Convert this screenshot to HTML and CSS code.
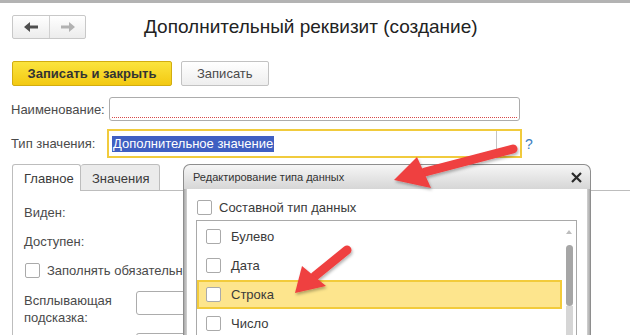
FILE: index.html
```html
<!DOCTYPE html>
<html lang="ru">
<head>
    <meta charset="UTF-8">
    <title>Дополнительный реквизит (создание)</title>
    <link rel="stylesheet" href="styles.css">
</head>
<body>
    <div class="topbar"></div>
    <header class="header">
        <div class="nav">
            <button class="nav-btn">
                <svg width="14" height="10" viewBox="0 0 14 10"><path d="M0 5 L6 0 L6 3.5 L14 3.5 L14 6.5 L6 6.5 L6 10 Z" fill="#4f4f4f"/></svg>
            </button>
            <button class="nav-btn">
                <svg width="14" height="10" viewBox="0 0 14 10"><path d="M14 5 L8 0 L8 3.5 L0 3.5 L0 6.5 L8 6.5 L8 10 Z" fill="#b2b2b2"/></svg>
            </button>
        </div>
        <h1>Дополнительный реквизит (создание)</h1>
    </header>

    <div class="toolbar">
        <button class="btn btn-main">Записать и закрыть</button>
        <button class="btn">Записать</button>
    </div>

    <div class="row row-name">
        <label>Наименование:</label>
        <div class="field field-name"></div>
    </div>
    <div class="row row-type">
        <label>Тип значения:</label>
        <div class="field field-type">
            <span class="sel">Дополнительное значение</span>
            <span class="choose"></span>
        </div>
        <span class="help">?</span>
    </div>

    <div class="tabs">
        <div class="tab active">Главное</div>
        <div class="tab">Значения</div>
        <div class="tab-rest"></div>
    </div>
    <div class="panel">
        <div class="prow">Виден:</div>
        <div class="prow">Доступен:</div>
        <div class="prow"><span class="cb"></span>Заполнять обязательно</div>
        <div class="prow hint">
            <span>Всплывающая<br>подсказка:</span>
            <div class="field small"></div>
        </div>
        <div class="prow last">
            <span></span>
            <div class="field small cut"></div>
        </div>
    </div>

    <div class="dialog">
        <div class="dlg-title">
            <span>Редактирование типа данных</span>
            <svg class="close" width="11" height="11" viewBox="0 0 11 11"><path d="M1 1 L10 10 M10 1 L1 10" stroke="#2a2a2a" stroke-width="2.2"/></svg>
        </div>
        <div class="dlg-body">
            <div class="compound"><span class="cb"></span>Составной тип данных</div>
            <div class="listbox">
                <ul class="types">
                    <li><span class="cb"></span>Булево</li>
                    <li><span class="cb"></span>Дата</li>
                    <li class="current"><span class="cb"></span>Строка</li>
                    <li><span class="cb"></span>Число</li>
                </ul>
                <div class="scroll">
                    <span class="up"></span>
                    <span class="thumb"></span>
                    <span class="track"></span>
                </div>
            </div>
        </div>
    </div>

    <svg class="arrows" width="630" height="335" viewBox="0 0 630 335">
        <defs>
            <filter id="sh" x="-20%" y="-20%" width="140%" height="140%">
                <feDropShadow dx="1" dy="2" stdDeviation="1.5" flood-color="#000" flood-opacity="0.3"/>
            </filter>
        </defs>
        <g filter="url(#sh)" fill="#ef3f3f">
            <line x1="513" y1="149" x2="425" y2="172" stroke="#ef3f3f" stroke-width="9" stroke-linecap="round"/>
            <polygon points="394,180 417,157 431,188"/>
            <line x1="347" y1="250" x2="315" y2="276" stroke="#ef3f3f" stroke-width="9" stroke-linecap="round"/>
            <polygon points="295,293 302,266 326,286"/>
        </g>
    </svg>
</body>
</html>
```

FILE: styles.css
```css
body {
    margin: 0;
    width: 630px;
    height: 335px;
    overflow: hidden;
    position: relative;
    background: #fff;
    font-family: "Liberation Sans", Arial, sans-serif;
    font-size: 13px;
    color: #4a4a4a;
}

.topbar {
    height: 3px;
    background: #b3b3b3;
}

.header {
    display: flex;
    align-items: center;
    margin: 12px 0 0 12px;
}

.nav {
    display: flex;
    height: 24px;
    border: 1px solid #c8c8c8;
    border-radius: 2px;
    box-sizing: border-box;
    background: linear-gradient(#ffffff, #ececec);
}

.nav-btn {
    width: 36px;
    border: none;
    background: none;
    padding: 0;
    display: flex;
    align-items: center;
    justify-content: center;
}

.nav-btn + .nav-btn {
    border-left: 1px solid #d0d0d0;
}

h1 {
    margin: 0 0 0 58px;
    font-size: 19px;
    font-weight: normal;
    color: #222;
}

.toolbar {
    display: flex;
    gap: 9px;
    margin: 22px 0 0 12px;
}

.btn {
    height: 25px;
    padding: 0 15px;
    border: 1px solid #c2c2c2;
    border-radius: 2px;
    background: linear-gradient(#ffffff, #eeeeee);
    font-family: inherit;
    font-size: 13px;
    color: #4a4a4a;
    white-space: nowrap;
}

.btn-main {
    width: 160px;
    padding: 0;
    border-color: #d2ad10;
    background: linear-gradient(#fbe43e, #f3c912);
    font-weight: bold;
    color: #333;
}

.row {
    display: flex;
    align-items: center;
    padding-left: 11px;
}

.row label {
    width: 98px;
    color: #4a4a4a;
}

.row-name {
    margin-top: 11px;
}

.row-type {
    margin-top: 8px;
}

.row-type label {
    width: 96px;
}

.field {
    border: 1px solid #acacac;
    border-radius: 3px;
    box-sizing: border-box;
}

.field-name {
    width: 411px;
    height: 24px;
    background: repeating-linear-gradient(90deg, #d84a4a 0 1px, transparent 1px 2px) left 2px bottom 2px / calc(100% - 4px) 1px no-repeat;
}

.field-type {
    width: 415px;
    height: 29px;
    border: 2px solid #f1cb3d;
    border-radius: 0;
    display: flex;
    align-items: center;
    padding-left: 3px;
}

.sel {
    background: #3f5fc2;
    color: #fff;
    line-height: 16px;
    padding: 0 1px;
}

.choose {
    margin-left: auto;
    margin-right: 23px;
    align-self: stretch;
    border-left: 1px solid #c4c4c4;
}

.help {
    margin-left: 3px;
    color: #3b7dc0;
    font-size: 14px;
}

.tabs {
    display: flex;
    margin: 6px 0 0 12px;
    height: 27px;
}

.tab {
    box-sizing: border-box;
    padding: 6px 10px 0 11px;
    border: 1px solid #bdbdbd;
    border-bottom: none;
    border-radius: 3px 3px 0 0;
    color: #3a3a3a;
}

.tab.active {
    width: 69px;
    background: #fff;
}

.tab + .tab {
    width: 79px;
    border-left: none;
    background: #ebebeb;
    border-bottom: 1px solid #bdbdbd;
}

.tab-rest {
    flex: 1;
    border-bottom: 1px solid #bdbdbd;
}

.panel {
    margin-left: 12px;
    border-left: 1px solid #bdbdbd;
    padding: 7px 0 0 11px;
}

.prow {
    height: 29px;
    display: flex;
    align-items: center;
    white-space: nowrap;
}

.cb {
    display: inline-block;
    width: 13px;
    height: 13px;
    border: 1px solid #aaa;
    border-radius: 2px;
    margin-right: 7px;
    background: #fff;
}

.prow .cb {
    margin-left: 1px;
}

.hint {
    height: auto;
    margin-top: 7px;
    align-items: flex-start;
    line-height: 17px;
}

.hint span,
.last span {
    width: 112px;
    flex: none;
}

.field.small {
    width: 70px;
    height: 24px;
    margin-top: -1px;
}

.last {
    height: 9px;
    margin-top: 8px;
    align-items: flex-start;
}

.field.cut {
    height: 3px;
    border-bottom: none;
    border-radius: 3px 3px 0 0;
}

.dialog {
    position: absolute;
    left: 183px;
    top: 164px;
    width: 408px;
    height: 171px;
    box-sizing: border-box;
    border: 1px solid #8e8e8e;
    border-bottom: none;
    border-radius: 7px 7px 0 0;
    background: linear-gradient(90deg, #a9a9a9, #d2d2d2 3px, #d2d2d2 calc(100% - 3px), #a9a9a9);
    padding: 0 3px;
    overflow: hidden;
}

.dlg-title {
    height: 24px;
    margin: 0 -3px;
    padding: 0 8px 0 9px;
    border-radius: 6px 6px 0 0;
    background: linear-gradient(#f6f6f6, #d6d6d6);
    display: flex;
    align-items: center;
    font-size: 11px;
    color: #333;
}

.close {
    margin-left: auto;
}

.dlg-body {
    background: #fff;
    height: 146px;
    padding: 0 9px;
}

.compound {
    display: flex;
    align-items: center;
    height: 31px;
    box-sizing: border-box;
    padding: 6px 0 0 1px;
    color: #3a3a3a;
}

.listbox {
    display: flex;
    width: 381px;
    box-sizing: border-box;
    border: 1px solid #a9a9a9;
    border-bottom: none;
    height: 115px;
    overflow: hidden;
}

.types {
    list-style: none;
    margin: 0;
    padding: 1px 0 0;
    flex: 1;
}

.types li {
    height: 29px;
    display: flex;
    align-items: center;
    padding-left: 9px;
    color: #3a3a3a;
    box-sizing: border-box;
}

.types li:last-child {
    height: 27px;
    padding-top: 2px;
}

.types li .cb {
    margin-right: 10px;
}

.types li.current {
    background: #fde58d;
    border: 2px solid #f2cb3b;
    padding-left: 7px;
}

.scroll {
    width: 14px;
    display: flex;
    flex-direction: column;
    align-items: center;
}

.up {
    margin-top: 9px;
    width: 0;
    height: 0;
    border-left: 3px solid transparent;
    border-right: 3px solid transparent;
    border-bottom: 4px solid #bdbdbd;
}

.thumb {
    margin-top: 11px;
    width: 7px;
    height: 61px;
    border-radius: 4px;
    background: #a6a6a6;
}

.track {
    width: 7px;
    flex: 1;
    background: #d6d6d6;
}

.arrows {
    position: absolute;
    left: 0;
    top: 0;
    pointer-events: none;
}
```
